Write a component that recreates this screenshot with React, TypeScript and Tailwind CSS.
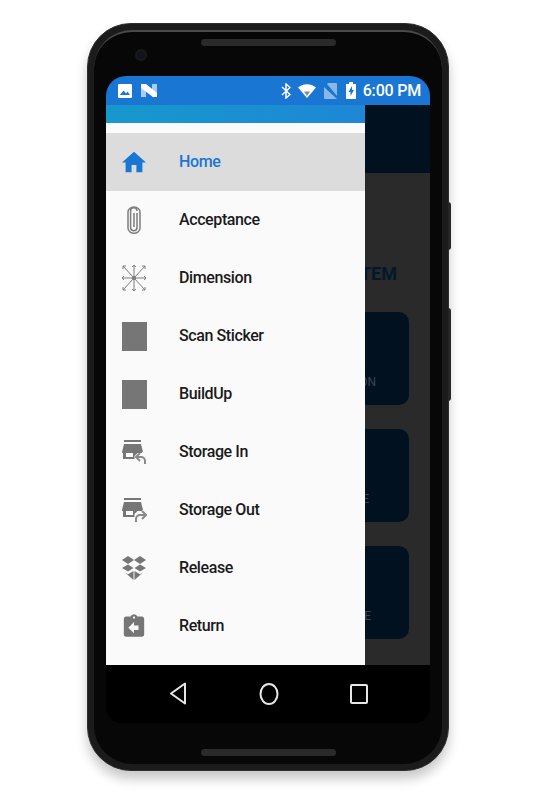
import React from 'react';

const font = { fontFamily: 'Roboto, sans-serif' };

const DimensionIcon = () => (
  <svg width="26" height="30" viewBox="0 0 26 30" fill="none" stroke="#7d7d7d" strokeWidth="1">
    <path d="M13 2v26M1 15h24M2 3l22 24M24 3L2 27" />
    <path d="M11 4l2-2 2 2M11 26l2 2 2-2M3 13l-2 2 2 2M23 13l2 2-2 2M2 6V3h3M21 3h3v3M2 24v3h3M21 27h3v-3" />
    <circle cx="13" cy="15" r="2" fill="#7d7d7d" stroke="none" />
  </svg>
);

const ClipIcon = () => (
  <svg width="14" height="28" viewBox="0 0 14 28" fill="none" stroke="#7d7d7d" strokeWidth="1.5">
    <path d="M10 7v14.500a3.200 3.200 0 0 1-6.400 0V5a3 3 0 0 1 6.400 0" />
    <path d="M7 7v14M1 6v16a6 5.300 0 0 0 12 0V6a6 5 0 0 0-12 0" />
  </svg>
);

const StoreIcon = ({ out }: { out?: boolean }) => (
  <svg width="26" height="26" viewBox="0 0 26 26">
    <path fill="#767676" d="M3 1h17v2H3zM3 5h17l2 8H21v1h-4.500l-3 3V20H2v-6H1v-1zM5 14v4h7v-4z" fillRule="evenodd" />
    {out ? (
      <path fill="none" stroke="#8a8a8a" strokeWidth="2" d="M15 25v-3a4 4 0 0 1 4-4h5M21 14l4 4-4 4" />
    ) : (
      <path fill="none" stroke="#8a8a8a" strokeWidth="2" d="M24 25v-3a4 4 0 0 0-4-4h-4M19 14l-4 4 4 4" />
    )}
  </svg>
);

const BoxIcon = () => (
  <svg width="24" height="26" viewBox="0 0 24 26" fill="#767676">
    <path d="M6 1l6 4-6 4-6-4zM18 1l6 4-6 4-6-4zM6 9.500l5.500 3.500-5.500 3.500L0 13zM18 9.500l6 3.500-6 3.500-5.500-3.500z" />
    <path d="M3 17.500l3 1.800 5.500-3.300v9zM21 17.500l-3 1.800-5.500-3.300v9z" />
  </svg>
);

const ReturnIcon = () => (
  <svg width="24" height="26" viewBox="3 0 18 23" fill="#767676">
    <path d="M19 3h-4.180C14.400 1.840 13.300 1 12 1c-1.300 0-2.400.840-2.820 2H5c-1.100 0-2 .900-2 2v14c0 1.100.900 2 2 2h14c1.100 0 2-.900 2-2V5c0-1.100-.900-2-2-2zm-7 0c.550 0 1 .450 1 1s-.450 1-1 1-1-.450-1-1 .450-1 1-1zm4 12h-4v3l-5-5 5-5v3h4v4z" />
  </svg>
);

const GraySquare = () => <div className="w-[25px] h-[29px] bg-[#767676]" />;

const menu: { label: string; icon: React.ReactNode }[] = [
  { label: 'Acceptance', icon: <ClipIcon /> },
  { label: 'Dimension', icon: <DimensionIcon /> },
  { label: 'Scan Sticker', icon: <GraySquare /> },
  { label: 'BuildUp', icon: <GraySquare /> },
  { label: 'Storage In', icon: <StoreIcon /> },
  { label: 'Storage Out', icon: <StoreIcon out /> },
  { label: 'Release', icon: <BoxIcon /> },
  { label: 'Return', icon: <ReturnIcon /> },
];

const Row: React.FC<{ label: string; icon: React.ReactNode; active?: boolean }> = ({ label, icon, active }) => (
  <div className={`h-[58px] flex items-center ${active ? 'bg-[#dcdcdc]' : ''}`}>
    <div className="w-[73px] pr-[17px] flex justify-center shrink-0">{icon}</div>
    <span className={`text-[16px] font-medium tracking-[-0.4px] ${active ? 'text-[#1976d2]' : 'text-[#1a1a1a]'}`}>{label}</span>
  </div>
);

const BackgroundCard: React.FC<{ text: string; pad: string }> = ({ text, pad }) => (
  <div className={`h-[93px] rounded-[10px] bg-[#02111f] flex items-end justify-end pb-[14px] ${pad}`}>
    <span className="text-[12px] text-[#3a454e]">{text}</span>
  </div>
);

export default function App() {
  return (
    <div className="w-[536px] h-[800px] bg-white overflow-hidden pt-[23px]" style={font}>
      <div className="relative w-[362px] h-[748px] mx-auto rounded-[44px] bg-[#1b1b1b] border border-[#2e2e2e] p-[6px] shadow-[0_8px_12px_rgba(0,0,0,0.22)]">
        {/* side buttons */}
        <div className="absolute right-[-3px] top-[178px] w-[3px] h-[48px] bg-[#262626] rounded-r-sm" />
        <div className="absolute right-[-3px] top-[284px] w-[3px] h-[93px] bg-[#262626] rounded-r-sm" />

        <div className="relative h-full rounded-[38px] bg-[#070707] border-t-2 border-[#4a4a4a] pt-[7px] px-[12px] flex flex-col items-center">
          {/* camera */}
          <div className="absolute left-[41px] top-[17px] w-[12px] h-[12px] rounded-full bg-[#12141c] border-2 border-[#1a1a1a]" />
          <div className="w-[135px] h-[7px] rounded-full bg-[#2a2a2a]" />

          <div className="relative w-[324px] h-[647px] mt-[30px] rounded-t-[20px] rounded-b-[16px] bg-black overflow-hidden flex flex-col shrink-0">
            {/* status bar */}
            <div className="h-[29px] bg-[#1976d2] flex items-center pl-[12px] pr-[9px] shrink-0">
              <svg width="14" height="14" viewBox="0 0 14 14">
                <path fill="#fff" fillRule="evenodd" d="M1 0h12a1 1 0 0 1 1 1v12a1 1 0 0 1-1 1H1a1 1 0 0 1-1-1V1a1 1 0 0 1 1-1zM2 11h10L9.500 7.500 8 9.500 5.500 6.500z" />
              </svg>
              <svg className="ml-[9px]" width="16" height="15" viewBox="0 0 16 15">
                <path fill="#a9cdee" d="M0 1h5v13H0zM11 1h5v13h-5z" />
                <path fill="#fff" d="M0 1h5l11 9v4h-4L0 5z" />
              </svg>
              <div className="flex-1" />
              <svg width="10" height="16" viewBox="0 0 10 16" fill="none" stroke="#fff" strokeWidth="1.500">
                <path d="M1 4l8 7.500L5 15V1l4 3.500L1 12" />
              </svg>
              <svg className="ml-[7px]" width="18" height="14" viewBox="0 0 18 14">
                <path fill="#fff" d="M0 3.500C5-1 13-1 18 3.500L9 14z" />
                <path fill="#8a8a8a" d="M6 7.500h6L9 12z" />
              </svg>
              <svg className="ml-[8px]" width="13" height="16" viewBox="0 0 13 16">
                <path fill="#8ab7e6" d="M4 0h8a1 1 0 0 1 1 1v12L3 1zM0 4l13 12H1a1 1 0 0 1-1-1z" />
              </svg>
              <svg className="ml-[9px]" width="10" height="17" viewBox="0 0 10 17">
                <path fill="#fff" fillRule="evenodd" d="M3 0h4v2h3v15H0V2h3zM6 4L2.500 10h2v4L8 8H6z" />
              </svg>
              <span className="ml-[7px] text-[16px] font-medium text-white tracking-[-0.2px] leading-none">6:00 PM</span>
            </div>

            <div className="relative h-[560px] bg-[#2a2a2a] shrink-0 overflow-hidden">
              {/* screen behind the drawer */}
              <div className="h-[68px] bg-[#02111f]" />
              <p className="mt-[90px] pr-[33px] text-right text-[18px] leading-[22px] font-bold text-[#02182c]">SYSTEM</p>
              <div className="mt-[27px] ml-[120px] mr-[21px] flex flex-col gap-[24px]">
                <BackgroundCard text="ON" pad="pr-[33px]" />
                <BackgroundCard text="E" pad="pr-[40px]" />
                <BackgroundCard text="E" pad="pr-[38px]" />
              </div>

              {/* drawer */}
              <div className="absolute left-0 top-0 w-[259px] h-full bg-[#fafafa]">
                <div className="h-[18px] bg-gradient-to-r from-[#1798cd] to-[#1e87d6]" />
                <div className="h-[10px]" />
                <Row
                  active
                  label="Home"
                  icon={
                    <svg width="24" height="24" viewBox="2 3 20 17" fill="#1976d2">
                      <path d="M10 20v-6h4v6h5v-8h3L12 3 2 12h3v8z" />
                    </svg>
                  }
                />
                {menu.map((m) => (
                  <Row key={m.label} label={m.label} icon={m.icon} />
                ))}
              </div>
            </div>

            {/* nav bar */}
            <div className="flex-1 bg-black flex items-center pb-[0px]">
              <div className="w-full flex items-center justify-between pl-[63px] pr-[62px] pb-[1px]">
                <svg width="18" height="23" viewBox="0 0 18 23" fill="none" stroke="#e6e6e6" strokeWidth="2" strokeLinejoin="round">
                  <path d="M16 1.500v20L2 11.500z" />
                </svg>
                <svg width="20" height="22" viewBox="0 0 20 22" fill="none" stroke="#e6e6e6" strokeWidth="2">
                  <ellipse cx="10" cy="11" rx="8.500" ry="10" />
                </svg>
                <svg width="18" height="20" viewBox="0 0 18 20" fill="none" stroke="#e6e6e6" strokeWidth="2">
                  <rect x="1" y="1" width="16" height="18" rx="1" />
                </svg>
              </div>
            </div>
          </div>

          <div className="w-[135px] h-[7px] mt-[26px] rounded-full bg-[#2a2a2a]" />
        </div>
      </div>
    </div>
  );
}
